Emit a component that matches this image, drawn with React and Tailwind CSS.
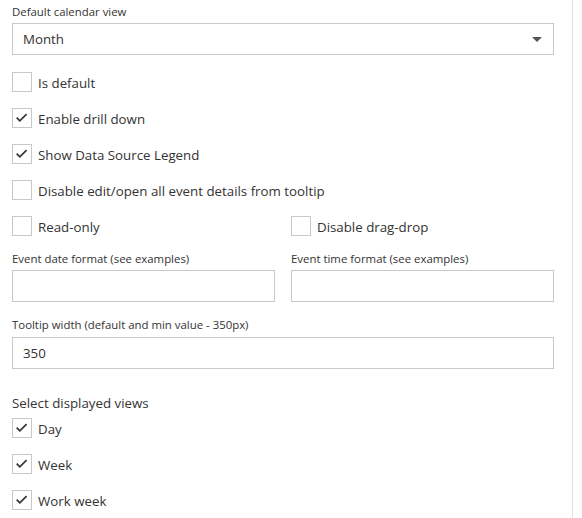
import React from "react";

const font = { fontFamily: '"Open Sans", "Noto Sans", sans-serif' };

function Check({ checked, label }) {
  return (
    <div className="flex items-center h-[36px]">
      <div className="w-[20px] h-[20px] border border-[#c8c8c8] bg-white shrink-0 relative">
        {checked && (
          <svg width="18" height="18" viewBox="1 1 18 18" className="block">
            <polyline points="4.7,9.6 7.8,12.8 14.6,6.2" fill="none" stroke="#333" strokeWidth="1.7" />
          </svg>
        )}
      </div>
      <span className="ml-[6px] text-[13.3px] leading-[20px] text-[#333] translate-y-[1px]">{label}</span>
    </div>
  );
}

function Label({ children, className = "" }) {
  return <div className={"text-[11.4px] leading-[16px] text-[#333] " + className}>{children}</div>;
}

function Input({ value }) {
  return (
    <div className="h-[32px] border border-[#c8c8c8] bg-white flex items-center px-[10px] text-[13.3px] text-[#333]">
      <span className="translate-y-[1px]">{value}</span>
    </div>
  );
}

export default function App() {
  return (
    <div className="bg-white w-[582px] h-[518px] overflow-hidden" style={font}>
      <div className="w-[573px] h-[518px] border-r border-[#e1e1e1] pl-[12px] pr-[18px] pt-[4px]">
        <Label className="mb-[3px]">Default calendar view</Label>
        <div className="h-[32px] border border-[#c8c8c8] flex items-center justify-between pl-[10px] pr-[11px] text-[13.3px] text-[#333]">
          <span className="translate-y-[1px]">Month</span>
          <svg width="10" height="5" viewBox="0 0 10 5">
            <polygon points="0,0 10,0 5,5" fill="#555" />
          </svg>
        </div>
        <div className="mt-[9px]">
          <Check label="Is default" />
          <Check checked label="Enable drill down" />
          <Check checked label="Show Data Source Legend" />
          <Check label="Disable edit/open all event details from tooltip" />
          <div className="grid grid-cols-2 gap-4">
            <Check label="Read-only" />
            <Check label="Disable drag-drop" />
          </div>
        </div>
        <div className="grid grid-cols-2 gap-4 mt-[7px]">
          <div>
            <Label className="mb-[3px]">Event date format (see examples)</Label>
            <Input />
          </div>
          <div>
            <Label className="mb-[3px]">Event time format (see examples)</Label>
            <Input />
          </div>
        </div>
        <Label className="mt-[15px] mb-[4px]">Tooltip width (default and min value - 350px)</Label>
        <Input value="350" />
        <div className="mt-[25px] text-[13.3px] leading-[16px] text-[#333] translate-y-[1px]">Select displayed views</div>
        <Check checked label="Day" />
        <Check checked label="Week" />
        <Check checked label="Work week" />
      </div>
    </div>
  );
}
